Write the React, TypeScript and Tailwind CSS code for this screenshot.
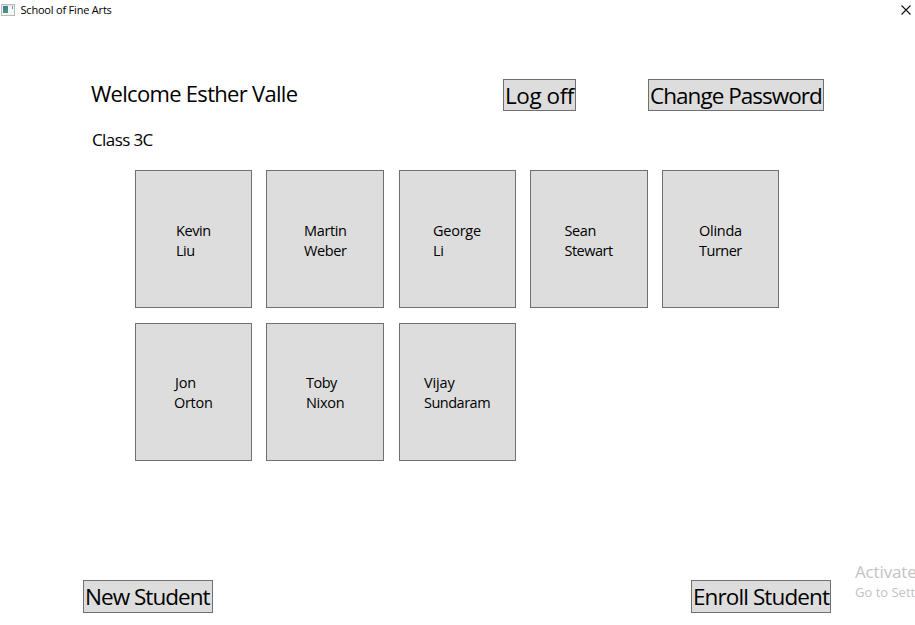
const students = [
  { first: "Kevin", last: "Liu", card: "w-[117px] pt-[3px]", text: "w-[35px]", a: "tracking-[-0.4px]", b: "tracking-[-0.5px]" },
  { first: "Martin", last: "Weber", card: "w-[118px] pt-[3px]", text: "w-[42px]", a: "tracking-[-0.35px]", b: "tracking-[-0.4px]" },
  { first: "George", last: "Li", card: "w-[117px] pt-[3px]", text: "w-[49px]", a: "tracking-[-0.25px]", b: "tracking-[-0.4px]" },
  { first: "Sean", last: "Stewart", card: "w-[118px] pt-[3px]", text: "w-[49px]", a: "tracking-[-0.4px]", b: "tracking-[-0.5px]" },
  { first: "Olinda", last: "Turner", card: "w-[117px] pt-[3px]", text: "w-[43px]", a: "tracking-[-0.25px]", b: "tracking-[-0.5px]" },
  { first: "Jon", last: "Orton", card: "w-[117px] pt-px", text: "w-[39px]", a: "pl-px tracking-[-0.2px]", b: "tracking-[-0.3px]" },
  { first: "Toby", last: "Nixon", card: "w-[118px] pt-px", text: "w-[38px]", a: "tracking-[-0.5px]", b: "tracking-[-0.3px]" },
  { first: "Vijay", last: "Sundaram", card: "w-[117px] pt-px", text: "w-[67px]", a: "tracking-[-0.15px]", b: "tracking-[-0.5px]" },
];

const button =
  "flex shrink-0 items-center border border-[#707070] bg-[#dddddd] pl-px text-[22.5px] leading-[30px] whitespace-nowrap";

export default function App() {
  return (
    <div className="flex h-[625px] w-[915px] flex-col overflow-hidden bg-white font-['Open_Sans','Noto_Sans',sans-serif] text-black">
      <header className="flex h-5 shrink-0 items-center pl-px">
        <svg width="14" height="12" viewBox="0 0 14 12" className="shrink-0">
          <defs>
            <linearGradient id="pane" x1="0" y1="0" x2="0.4" y2="1">
              <stop offset="0" stopColor="#3f6fae" />
              <stop offset="1" stopColor="#4c9a6a" />
            </linearGradient>
          </defs>
          <rect x="0.5" y="0.5" width="13" height="11" fill="#f4f6f8" stroke="#b4bac0" />
          <rect x="1" y="1" width="12" height="1" fill="#dde3ea" />
          <rect x="2" y="2" width="5" height="7" fill="url(#pane)" />
          <rect x="11" y="2" width="1" height="3" fill="#6aa08a" />
        </svg>
        <h1 className="ml-[5.5px] text-[11px] leading-5 tracking-[-0.2px] whitespace-nowrap">School of Fine Arts</h1>
        <svg width="10" height="10" viewBox="0 0 10 10" className="mr-1 ml-auto" stroke="#111" strokeWidth="1.1">
          <path d="M0.5 0.5L9.5 9.5M9.5 0.5L0.5 9.5" />
        </svg>
      </header>

      <section className="mt-[59px] flex h-8 shrink-0 pl-[91px]">
        <h2 className="-mt-px w-[412px] text-[22px] leading-[30px] tracking-[-0.7px] whitespace-nowrap">Welcome Esther Valle</h2>
        <button className={`${button} h-8 w-[73px] pt-px tracking-[-0.45px]`}>Log off</button>
        <button className={`${button} ml-[72px] h-8 w-[176px] pt-px tracking-[-0.97px]`}>Change Password</button>
      </section>

      <h3 className="mt-[17px] h-[42px] shrink-0 pl-[92px] text-[17px] leading-6 tracking-[-0.6px]">Class 3C</h3>

      <main className="grid grid-cols-[131px_133px_131px_132px_117px] grid-rows-[138px_138px] gap-y-[15px] pl-[135px]">
        {students.map((s) => (
          <button
            key={s.first}
            className={`flex items-center justify-center border border-[#707070] bg-[#dddddd] text-left text-[14.5px] leading-5 whitespace-nowrap ${s.card}`}
          >
            <span className={`flex flex-col ${s.text}`}>
              <span className={s.a}>{s.first}</span>
              <span className={s.b}>{s.last}</span>
            </span>
          </button>
        ))}
      </main>

      <footer className="mt-auto flex h-[65px] shrink-0 pl-[83px]">
        <button className={`${button} mt-5 h-[33px] w-[130px] tracking-[-0.97px]`}>New Student</button>
        <button className={`${button} mt-5 ml-[478px] h-[33px] w-[140px] tracking-[-0.9px]`}>Enroll Student</button>
        <aside className="ml-6 w-[60px] whitespace-nowrap text-[#c3c3c3]">
          <p className="text-[17px] leading-6 tracking-[-0.15px]">Activate</p>
          <p className="-mt-px text-[13px] leading-[18px]">Go to Sett</p>
        </aside>
      </footer>
    </div>
  );
}
